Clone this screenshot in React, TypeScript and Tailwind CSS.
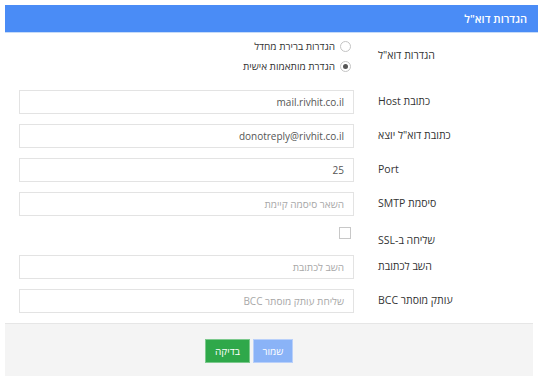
import React from "react";

const font = { fontFamily: '"Open Sans", "Liberation Sans", sans-serif' };

function Radio({ checked, label }: { checked?: boolean; label: string }) {
  return (
    <div className="flex items-center h-[20px] gap-[5px]">
      <div className="w-[11px] h-[11px] rounded-full border border-[#c4c4c4] bg-white flex items-center justify-center">
        {checked && <div className="w-[5px] h-[5px] rounded-full bg-[#555]" />}
      </div>
      <span className="text-[10px] text-[#333] leading-none">{label}</span>
    </div>
  );
}

function InputRow({ label, value, placeholder }: { label: string; value?: string; placeholder?: string }) {
  return (
    <div className="flex items-center h-[24px] mb-[10px]">
      <div className="w-[160px] text-left text-[10.5px] text-[#333]">{label}</div>
      <div className="w-[335px] mr-[24px] h-[24px] border border-[#e3e3e3] bg-white flex items-center px-[9px] text-[10px]">
        {value ? (
          <span className="text-[#555]">{value}</span>
        ) : (
          <span className="text-[#a8a8a8]">{placeholder}</span>
        )}
      </div>
    </div>
  );
}

export default function App() {
  return (
    <div dir="rtl" style={font} className="w-[548px] h-[383px] bg-white overflow-hidden pt-[5px]">
      <div className="ml-[5px] mr-[10px] h-[28px] bg-[#4a8cf6] border-b border-[#c6dbf8] flex items-center pr-[11px]">
        <span className="text-white text-[11px] font-semibold leading-none">הגדרות דוא"ל</span>
      </div>
      <div className="ml-[5px] mr-[10px]">
        <div className="flex mt-[3px]">
          <div className="w-[160px] text-left pt-[12px] text-[10.5px] text-[#333]">הגדרות דוא"ל</div>
          <div className="mr-[27px] flex flex-col">
            <Radio label="הגדרות ברירת מחדל" />
            <Radio checked label="הגדרת מותאמות אישית" />
          </div>
        </div>
        <div className="mt-[14px]">
          <InputRow label="כתובת Host" value="mail.rivhit.co.il" />
          <InputRow label='כתובת דוא"ל יוצא' value="donotreply@rivhit.co.il" />
          <InputRow label="Port" value="25" />
          <InputRow label="סיסמת SMTP" placeholder="השאר סיסמה קיימת" />
          <div className="flex h-[19px] mb-[10px]">
            <div className="w-[160px] text-left pt-[7px] text-[10.5px] text-[#333]">שליחה ב-SSL</div>
            <div className="mr-[27px] pt-[1px]">
              <div className="w-[12px] h-[12px] border border-[#c8c8c8] bg-white" />
            </div>
          </div>
          <InputRow label="השב לכתובת" placeholder="השב לכתובת" />
          <InputRow label="עותק מוסתר BCC" placeholder="שליחת עותק מוסתר BCC" />
        </div>
      </div>
      <div className="ml-[5px] mr-[15px] mt-[3px] h-[53px] bg-[#f4f4f4] border-t border-[#e6e6e6] flex items-start pt-[15px] pr-[240px] gap-[3px]">
        <button className="h-[24px] w-[40px] bg-[#8ab3f7] border border-[#b9d0fa] text-white text-[10px]">שמור</button>
        <button className="h-[24px] w-[45px] bg-[#2fa84a] border border-[#7cc98d] text-white text-[10px]">בדיקה</button>
      </div>
    </div>
  );
}
